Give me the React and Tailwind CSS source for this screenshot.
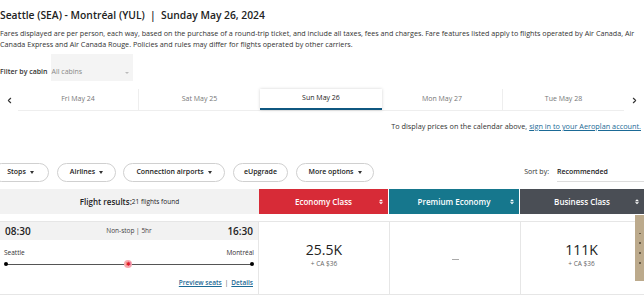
import { ChevronLeft, ChevronRight } from 'lucide-react'

const tabs = ['Fri May 24', 'Sat May 25', 'Sun May 26', 'Mon May 27', 'Tue May 28']
const pills = [
  { label: 'Stops', caret: true, w: 'w-[57px]', ml: '-ml-[8px]' },
  { label: 'Airlines', caret: true, w: 'w-[59px]', ml: 'ml-[8px]' },
  { label: 'Connection airports', caret: true, w: 'w-[102px]', ml: 'ml-[7px]' },
  { label: 'eUpgrade', caret: false, w: 'w-[55px]', ml: 'ml-[8px]' },
  { label: 'More options', caret: true, w: 'w-[78px]', ml: 'ml-[8px]' },
]

function Caret() {
  return <span className="ml-[4px] inline-block w-0 h-0 border-l-[2.5px] border-r-[2.5px] border-t-[3px] border-l-transparent border-r-transparent border-t-[#333]" />
}

function SortIcon() {
  return (
    <span className="absolute right-[5px] top-1/2 -translate-y-1/2 flex flex-col gap-[1.5px]">
      <span className="block w-0 h-0 border-l-[2px] border-r-[2px] border-b-[2.5px] border-l-transparent border-r-transparent border-b-white" />
      <span className="block w-0 h-0 border-l-[2px] border-r-[2px] border-t-[2.5px] border-l-transparent border-r-transparent border-t-white" />
    </span>
  )
}

export default function App() {
  return (
    <div className="w-[644px] h-[300px] overflow-hidden bg-white text-[#333] font-['Open_Sans',sans-serif]">
      {/* Title */}
      <div className="mt-[5px] h-[20px] leading-[20px] text-[10.3px] font-semibold text-[#222] whitespace-nowrap">
        Seattle (SEA) - Montréal (YUL) &nbsp;|&nbsp; Sunday May 26, 2024
      </div>
      <p className="mt-[3px] text-[7.2px] leading-[11px] text-[#333]">
        Fares displayed are per person, each way, based on the purchase of a round-trip ticket, and include all taxes, fees and charges. Fare features listed apply to flights operated by Air Canada, Air Canada Express and Air Canada Rouge. Policies and rules may differ for flights operated by other carriers.
      </p>

      {/* Filter by cabin */}
      <div className="mt-[4px] flex items-end h-[27px]">
        <span className="text-[7px] font-semibold pb-[4px] whitespace-nowrap">Filter by cabin</span>
        <div className="ml-[3px] w-[82px] h-[27px] bg-[#f4f4f4] flex items-end justify-between pb-[4px] px-[1px]">
          <span className="text-[7px] text-[#888]">All cabins</span>
          <span className="mb-[3px] mr-[3px] w-0 h-0 border-l-[2px] border-r-[2px] border-t-[2.5px] border-l-transparent border-r-transparent border-t-[#bbb]" />
        </div>
      </div>

      {/* Date tabs */}
      <div className="mt-[8px] h-[22px] flex items-center">
        <div className="w-[18px] flex justify-center"><ChevronLeft size={9} strokeWidth={3} className="text-[#333]" /></div>
        <div className="flex h-full border-b border-[#eee]">
          {tabs.map((t, i) => (
            i === 2 ? (
              <div key={t} className="w-[122px] h-full flex items-center justify-center text-[7px] text-[#222] bg-white shadow-[0_0_3px_rgba(0,0,0,0.18)] border-b-2 border-[#0f5780]">
                {t}
              </div>
            ) : (
              <div key={t} className={`w-[121px] h-full flex items-center justify-center text-[7px] text-[#777] ${i === 0 || i === 3 ? 'border-r border-[#eee]' : ''}`}>
                {t}
              </div>
            )
          ))}
        </div>
        <div className="flex-1 flex justify-center"><ChevronRight size={9} strokeWidth={3} className="text-[#333]" /></div>
      </div>

      <div className="mt-[10px] h-[10px] leading-[10px] text-[7.3px] text-right pr-[3px] whitespace-nowrap">
        To display prices on the calendar above,{' '}
        <span className="text-[#1b6a96] underline">sign in to your Aeroplan account.</span>
      </div>

      {/* Filter pills + sort */}
      <div className="mt-[32px] h-[19px] flex items-center">
        {pills.map(p => (
          <div key={p.label} className={`${p.w} ${p.ml} h-[19px] rounded-full border border-[#d0d0d0] flex items-center justify-center text-[7px] font-semibold text-[#222] whitespace-nowrap`}>
            {p.label}{p.caret && <Caret />}
          </div>
        ))}
        <div className="ml-auto flex items-center h-[19px]">
          <span className="text-[7px] text-[#333] mr-[8px]">Sort by:</span>
          <div className="w-[87px] h-[19px] border-b border-[#ddd] flex items-center text-[7px] font-semibold text-[#222]">
            Recommended
          </div>
        </div>
      </div>

      {/* Results header */}
      <div className="mt-[7px] h-[25px] flex">
        <div className="w-[259px] bg-[#f2f2f2] flex items-center justify-center text-[#222]">
          <span className="text-[8px] font-semibold">Flight results:</span>
          <span className="text-[6.5px]">21 flights found</span>
        </div>
        <div className="relative w-[130px] bg-[#d72b37] flex items-center justify-center text-white text-[8px] font-semibold border-r border-white">
          Economy Class<SortIcon />
        </div>
        <div className="relative w-[131px] bg-[#16778d] flex items-center justify-center text-white text-[8px] font-semibold border-r border-white">
          Premium Economy<SortIcon />
        </div>
        <div className="relative w-[124px] bg-[#4a4e55] flex items-center justify-center text-white text-[8px] font-semibold">
          Business Class<SortIcon />
        </div>
      </div>

      {/* Flight card */}
      <div className="relative mt-[7px] h-[74px] flex border-t border-b border-[#e6e6e6]">
        <div className="w-[259px] border-r border-[#e6e6e6] flex flex-col">
          <div className="h-[18px] bg-[#f2f2f2] flex items-center justify-between px-[5px]">
            <span className="text-[10px] font-semibold text-[#222]">08:30</span>
            <span className="text-[6.5px] text-[#444]">Non-stop | 5hr</span>
            <span className="text-[10px] font-semibold text-[#222]">16:30</span>
          </div>
          <div className="mt-[8px] flex justify-between px-[4px] text-[6.5px] text-[#333]">
            <span>Seattle</span>
            <span>Montréal</span>
          </div>
          <div className="relative mx-[6px] mt-[3px] h-[6px] flex items-center">
            <div className="absolute left-0 right-0 top-1/2 h-px bg-[#555]" />
            <span className="absolute left-[-2px] w-[4px] h-[4px] rounded-full bg-black" />
            <span className="absolute right-[-2px] w-[4px] h-[4px] rounded-full bg-black" />
            <span className="absolute left-[118px] w-[8px] h-[8px] rounded-full bg-[#f7a9b0] flex items-center justify-center">
              <span className="text-[6px] leading-none text-[#e01a2b]">✱</span>
            </span>
          </div>
          <div className="mt-auto mb-[6px] pr-[5px] text-right text-[6.5px] text-[#999]">
            <span className="text-[#1b6a96] underline font-semibold">Preview seats</span>
            <span className="mx-[3px] text-[#555]">|</span>
            <span className="text-[#1b6a96] underline font-semibold">Details</span>
          </div>
        </div>
        <div className="w-[131px] border-r border-[#e6e6e6] flex flex-col items-center justify-center pb-[6px]">
          <span className="text-[14px] leading-[18px] text-[#222]">25.5K</span>
          <span className="text-[6.5px] text-[#666]">+ CA $36</span>
        </div>
        <div className="w-[131px] border-r border-[#e6e6e6] flex items-center justify-center pt-[2px]">
          <span className="w-[7px] h-px bg-[#aaa]" />
        </div>
        <div className="flex-1 flex flex-col items-center justify-center pb-[6px] pr-[2px]">
          <span className="text-[14px] leading-[18px] text-[#222]">111K</span>
          <span className="text-[6.5px] text-[#666]">+ CA $36</span>
        </div>
        <div className="absolute right-0 top-[-7px] w-[9px] h-[66px] bg-[#bcaa8c] flex flex-col items-center justify-center gap-[8px]">
          <span className="w-[2px] h-[1px] bg-[#6b5e48]" />
          <span className="w-[2px] h-[2px] bg-[#6b5e48]" />
          <span className="w-[2px] h-[2px] bg-[#6b5e48]" />
          <span className="w-[2px] h-[2px] bg-[#6b5e48]" />
        </div>
      </div>
    </div>
  )
}
